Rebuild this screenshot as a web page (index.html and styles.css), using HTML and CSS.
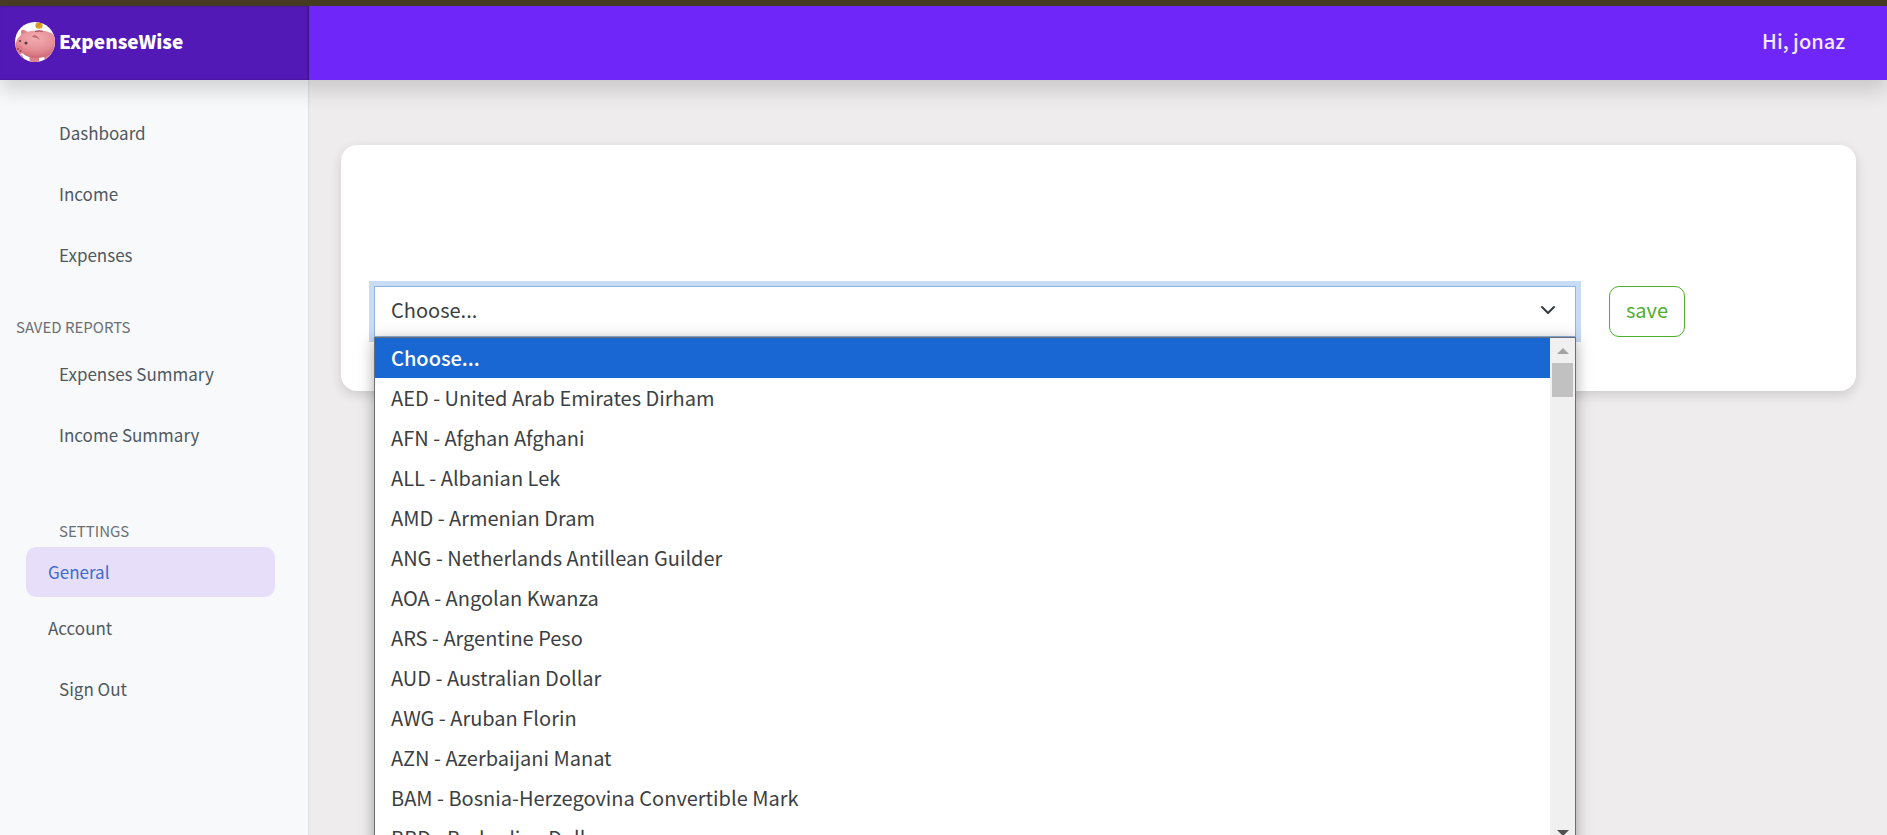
FILE: index.html
```html
<!DOCTYPE html>
<html lang="en">
<head>
<meta charset="utf-8">
<title>ExpenseWise</title>
<link rel="stylesheet" href="styles.css">
</head>
<body>
<header class="topbar">
  <a class="brand" href="#">
    <svg class="brand-logo" viewBox="0 0 40 40" aria-hidden="true">
      <defs>
        <clipPath id="round"><circle cx="20" cy="20" r="20"/></clipPath>
        <radialGradient id="skin" cx="0.5" cy="0.28" r="0.75">
          <stop offset="0" stop-color="#f2aeb2"/>
          <stop offset="0.6" stop-color="#e58d95"/>
          <stop offset="1" stop-color="#c9626f"/>
        </radialGradient>
      </defs>
      <g clip-path="url(#round)">
        <rect width="40" height="40" fill="#fff"/>
        <ellipse cx="24" cy="3.500" rx="3.600" ry="3.200" fill="#dba126"/>
        <path d="M21.500 4.500l4-3" stroke="#b97c14" stroke-width="1"/>
        <path d="M14 33h10v7H15zM3 31l5 3-1 5-5-4zM29 34l6-3 1 5-6 4z" fill="#d9828b"/>
        <path d="M7 14C5 10 6 7 9 8l6 3z" fill="#d9808a"/>
        <path d="M1 20C4 12 12 8.500 22 8.500S40 10 42 20c0 9-8 16-20 16-9 0-12-3-15-5-5 0-8-3-7-7z" fill="url(#skin)"/>
        <path d="M17 15c2-3 5-2 8 3-3-2-5-3-8-3z" fill="#c0616d"/>
        <path d="M20 9.500c3-.8 6-.8 8 0" stroke="#9f5260" stroke-width="1.200" fill="none"/>
        <ellipse cx="4" cy="28" rx="3.800" ry="4.500" fill="#dc7d87"/>
        <circle cx="3" cy="27" r="1" fill="#9c3d4d"/>
        <circle cx="5.500" cy="29" r="1" fill="#9c3d4d"/>
        <circle cx="11" cy="21" r="1.500" fill="#553a43"/>
        <circle cx="5" cy="19" r="1.100" fill="#553a43"/>
      </g>
    </svg>
    <span class="brand-name">ExpenseWise</span>
  </a>
  <span class="greeting">Hi, jonaz</span>
</header>
<div class="layout">
  <nav class="sidebar" aria-label="Main">
    <ul class="nav-list">
      <li><a class="nav-link" href="#">Dashboard</a></li>
      <li><a class="nav-link" href="#">Income</a></li>
      <li><a class="nav-link" href="#">Expenses</a></li>
    </ul>
    <h2 class="nav-heading">SAVED REPORTS</h2>
    <ul class="nav-list">
      <li><a class="nav-link" href="#">Expenses Summary</a></li>
      <li><a class="nav-link" href="#">Income Summary</a></li>
    </ul>
    <h2 class="nav-heading nav-heading-settings">SETTINGS</h2>
    <ul class="nav-list settings-list">
      <li><a class="nav-link sub-link active" href="#" aria-current="page">General</a></li>
      <li><a class="nav-link sub-link" href="#">Account</a></li>
      <li><a class="nav-link" href="#">Sign Out</a></li>
    </ul>
  </nav>
  <main class="content">
    <form class="card">
      <div class="field">
        <select class="currency" aria-label="Currency">
          <option>Choose...</option>
        </select>
        <svg class="chevron" viewBox="0 0 16 16" aria-hidden="true"><path d="M2 5l6 6 6-6"/></svg>
        <div class="popup">
          <ul class="options" role="listbox" aria-label="Currency options">
            <li class="option selected" role="option" aria-selected="true">Choose...</li>
            <li class="option" role="option">AED - United Arab Emirates Dirham</li>
            <li class="option" role="option">AFN - Afghan Afghani</li>
            <li class="option" role="option">ALL - Albanian Lek</li>
            <li class="option" role="option">AMD - Armenian Dram</li>
            <li class="option" role="option">ANG - Netherlands Antillean Guilder</li>
            <li class="option" role="option">AOA - Angolan Kwanza</li>
            <li class="option" role="option">ARS - Argentine Peso</li>
            <li class="option" role="option">AUD - Australian Dollar</li>
            <li class="option" role="option">AWG - Aruban Florin</li>
            <li class="option" role="option">AZN - Azerbaijani Manat</li>
            <li class="option" role="option">BAM - Bosnia-Herzegovina Convertible Mark</li>
            <li class="option" role="option">BBD - Barbadian Dollar</li>
          </ul>
          <div class="scrollbar" aria-hidden="true">
            <svg class="arrow arrow-up" viewBox="0 0 12 6"><path d="M6 0l6 6H0z"/></svg>
            <span class="thumb"></span>
            <svg class="arrow arrow-down" viewBox="0 0 12 6"><path d="M0 0h12L6 6z"/></svg>
          </div>
        </div>
      </div>
      <button class="save" type="button">save</button>
    </form>
  </main>
</div>
</body>
</html>
```
FILE: styles.css
```css
* { box-sizing: border-box; }

html { height: 100%; }

body {
  margin: 0;
  height: 100%;
  display: flex;
  flex-direction: column;
  overflow: hidden;
  background: #eeeced;
  color: #3b3f44;
  font-family: "Noto Sans CJK SC", "Noto Sans", sans-serif;
  font-size: 20px;
  line-height: 24px;
}

ul { list-style: none; margin: 0; padding: 0; }

a { color: inherit; text-decoration: none; }

.topbar {
  position: relative;
  z-index: 2;
  flex: none;
  display: flex;
  align-items: stretch;
  justify-content: space-between;
  height: 80px;
  border-top: 6px solid #453b22;
  background: #6f26f9;
  box-shadow: 0 10px 20px rgba(0, 0, 0, 0.16);
  color: #fff;
}

.brand {
  display: flex;
  align-items: center;
  gap: 4px;
  width: 309px;
  padding: 0 0 2px 15px;
  background: #5319b7;
  box-shadow: inset -1px 0 2px rgba(0, 0, 0, 0.35);
  font-size: 19px;
  font-weight: 900;
}

.brand-logo { width: 40px; height: 40px; }

.brand-name { padding-bottom: 3px; }

.greeting {
  align-self: center;
  padding: 0 42px 4px 0;
  color: #f3eaff;
  font-weight: 500;
}

.layout { flex: 1; display: flex; min-height: 0; }

.sidebar {
  flex: none;
  width: 309px;
  padding-top: 23px;
  border-right: 1px solid #dedfe1;
  background: #f8f9fb;
  color: #4f5860;
  font-size: 17px;
}

.nav-list { display: grid; row-gap: 1px; }

.nav-link {
  display: flex;
  align-items: center;
  height: 60px;
  padding-left: 59px;
}

.nav-heading {
  margin: 29px 0 4px;
  padding-left: 16px;
  color: #6b7075;
  font-size: 15px;
  font-weight: 400;
  line-height: 26px;
}

.nav-heading-settings {
  margin: 53px 0 3px;
  padding-left: 59px;
}

.settings-list { row-gap: 6px; }

.sub-link {
  height: 50px;
  margin: 0 33px 0 26px;
  padding-left: 22px;
  border-radius: 10px;
}

.sub-link.active { background: #e7dffa; color: #3b6cd0; }

.content { flex: 1; min-width: 0; padding: 65px 31px 0 32px; }

.card {
  display: grid;
  grid-template-columns: repeat(12, 1fr);
  column-gap: 33px;
  padding: 141px 33px 54px;
  border-radius: 16px;
  background: #fff;
  box-shadow: 0 4px 12px rgba(0, 0, 0, 0.14);
}

.field { position: relative; grid-column: span 10; }

.currency {
  display: block;
  appearance: none;
  width: 100%;
  height: 51px;
  padding: 0 16px 3px;
  border: 1px solid #8db4e3;
  border-radius: 0;
  outline: none;
  background: #fff;
  box-shadow: 0 0 0 5px #c8dcf5;
  color: inherit;
  font: inherit;
}

.chevron {
  position: absolute;
  top: 16px;
  right: 20px;
  width: 16px;
  height: 16px;
  fill: none;
  stroke: #343a40;
  stroke-width: 2;
  stroke-linecap: round;
  stroke-linejoin: round;
}

.popup {
  position: absolute;
  z-index: 1;
  top: 51px;
  left: 0;
  right: 0;
  display: flex;
  border: 1px solid #6c6e70;
  background: #fff;
  box-shadow: 0 3px 14px rgba(0, 0, 0, 0.35);
}

.options { flex: 1; height: 508px; overflow: hidden; }

.option {
  height: 40px;
  padding-left: 16px;
  line-height: 40px;
}

.option.selected { background: #1967d2; color: #fff; font-weight: 500; }

.scrollbar {
  display: flex;
  flex-direction: column;
  align-items: center;
  width: 25px;
  padding: 10px 0;
  background: #f0f0f0;
}

.arrow { width: 12px; height: 6px; }

.arrow-up { fill: #a3a3a3; }

.arrow-down { margin-top: auto; fill: #505050; }

.thumb { width: 21px; height: 34px; margin-top: 9px; background: #c1c1c1; }

.save {
  grid-column: span 2;
  justify-self: start;
  height: 51px;
  padding: 0 16px 3px;
  border: 1px solid #4eaf2b;
  border-radius: 10px;
  background: #fff;
  color: #4eaf2b;
  font: inherit;
}
```
